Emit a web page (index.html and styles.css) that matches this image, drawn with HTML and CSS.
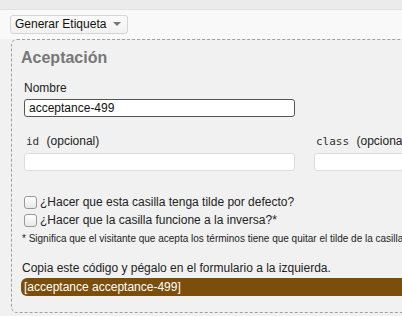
FILE: index.html
```html
<!DOCTYPE html>
<html>
    <head>
        <meta charset="utf-8">
        <title>Generar Etiqueta</title>
        <link rel="stylesheet" href="styles.css">
    </head>
    <body>
        <div class="topbar"></div>

        <nav class="toolbar">
            <button class="tag-button">Generar Etiqueta <span class="caret"></span></button>
        </nav>

        <section class="panel">
            <h2>Aceptación</h2>

            <div class="fields">
                <label class="field name-field">
                    <span class="label">Nombre</span>
                    <input type="text" class="focused" value="acceptance-499">
                </label>

                <div class="row">
                    <label class="field">
                        <span class="label"><code>id</code> (opcional)</span>
                        <input type="text">
                    </label>
                    <label class="field">
                        <span class="label"><code>class</code> (opcional)</span>
                        <input type="text">
                    </label>
                </div>

                <div class="options">
                    <label class="check"><span class="box"></span>¿Hacer que esta casilla tenga tilde por defecto?</label>
                    <label class="check"><span class="box"></span>¿Hacer que la casilla funcione a la inversa?*</label>
                </div>
            </div>

            <p class="note">* Significa que el visitante que acepta los términos tiene que quitar el tilde de la casilla.</p>

            <div class="code">
                <p>Copia este código y pégalo en el formulario a la izquierda.</p>
                <div class="code-box">[acceptance acceptance-499]</div>
            </div>
        </section>
    </body>
</html>
```

FILE: styles.css
```css
body {
    margin: 0; padding: 0;
    background: #F1F1F1;
    color: #222;
    font-family: "Liberation Sans", Helvetica, Arial, sans-serif;
    font-size: 12px;
    overflow: hidden;
}

.topbar {
    height: 9px;
    background: #EBEBEB;
    border-bottom: 1px solid #E2E2E2;
}

.toolbar {
    height: 19px;
    padding: 5px 10px 5px;
    background: #F9F9F9;
}

.tag-button {
    height: 19px;
    padding: 0 5px 0 4px;
    border: 1px solid #D4D4D4;
    border-radius: 3px;
    background: linear-gradient(#FBFBFB, #F1F1F1);
    font-family: inherit;
    font-size: 12px;
    color: #111;
    line-height: 17px;
}

.caret {
    display: inline-block;
    margin: 0 1px 2px 3px;
    border-left: 4px solid transparent;
    border-right: 4px solid transparent;
    border-top: 4px solid #777;
    vertical-align: middle;
}

.panel {
    width: 460px;
    height: 272px;
    margin-left: 11px;
    padding: 0 9px;
    border: 1px dashed #A0A0A0;
    border-radius: 6px;
}

h2 {
    margin: 0;
    padding-top: 8px;
    font-size: 16px;
    line-height: 19px;
    color: #777;
}

.fields { padding: 14px 0 0 3px; }

.field { display: block; }

.label {
    display: block;
    line-height: 15px;
    margin-bottom: 3px;
}

code {
    font-family: "DejaVu Sans Mono", monospace;
    font-size: 11px;
    color: #333;
    margin-right: 4px;
}

input {
    display: block;
    box-sizing: border-box;
    width: 271px;
    height: 18px;
    margin: 0;
    padding: 0 4px;
    border: 1px solid #DDD;
    border-radius: 3px;
    background: #FFF;
    font-family: inherit;
    font-size: 12px;
    color: #111;
}

input.focused { border-color: #555; }

.row {
    display: flex;
    gap: 19px;
    margin-top: 17px;
}

.row .label { margin-left: 2px; margin-bottom: 4px; }

.options { margin-top: 22px; }

.check {
    display: flex;
    align-items: center;
    line-height: 18px;
}

.box {
    width: 11px;
    height: 11px;
    margin-right: 3px;
    border: 1px solid #999;
    border-radius: 3px;
    background: linear-gradient(#FFF, #E8E8E8);
}

.note {
    margin: 4px 0 0 1px;
    font-size: 10px;
    line-height: 12px;
    white-space: nowrap;
}

.code { margin-top: 16px; }

.code p { margin: 0 0 2px 1px; line-height: 15px; }

.code-box {
    height: 18px;
    padding: 0 3px;
    border-radius: 6px 0 0 6px;
    background: #7B4F0B;
    color: #FFF;
    line-height: 18px;
}
```
